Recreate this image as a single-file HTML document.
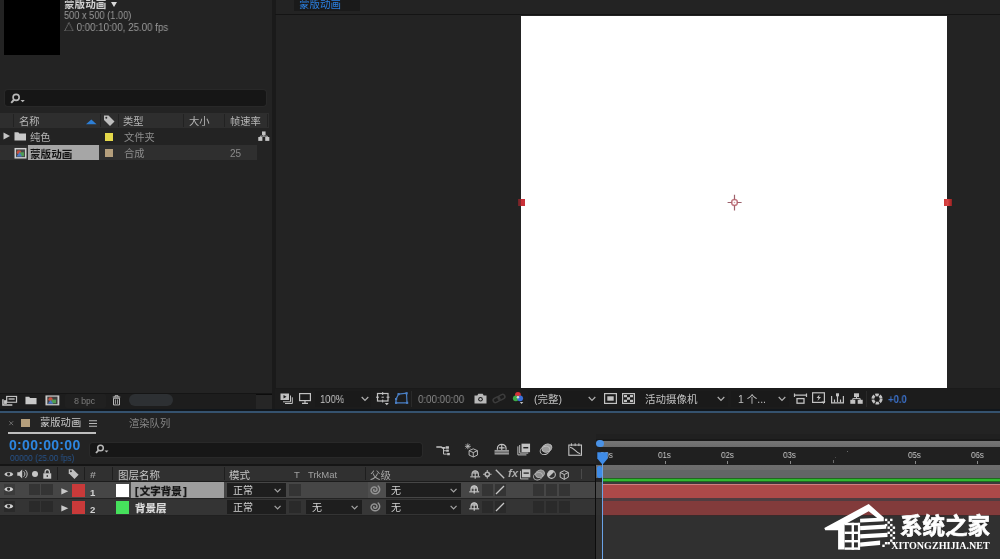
<!DOCTYPE html>
<html lang="zh-CN">
<head>
<meta charset="utf-8">
<title>蒙版动画</title>
<style>
*{box-sizing:border-box;margin:0;padding:0}
html,body{width:1000px;height:559px;overflow:hidden;background:#232323}
body{position:relative;font-family:"Liberation Sans","Noto Sans CJK SC",sans-serif;font-size:11px;color:#a9a9a9;line-height:1}
.a{position:absolute}
.t{position:absolute;white-space:nowrap;line-height:1;will-change:transform}
svg{position:absolute;overflow:visible}
</style>
</head>
<body>
<!-- ===== PROJECT PANEL ===== -->
<div id="project">
  <div class="a" style="left:4px;top:0;width:56px;height:55px;background:#000"></div>
  <div class="t" style="left:64px;top:-1.5px;font-size:10.6px;font-weight:bold;color:#cfcfcf">蒙版动画</div>
  <div class="a" style="left:111px;top:2px;width:0;height:0;border-left:3.5px solid transparent;border-right:3.5px solid transparent;border-top:5px solid #d8d8d8"></div>
  <div class="t" style="left:64px;top:10px;font-size:10.5px;color:#999;transform:scaleX(.88);transform-origin:0 0">500 x 500 (1.00)</div>
  <div class="t" style="left:64px;top:21.5px;font-size:10.5px;color:#999;transform:scaleX(.93);transform-origin:0 0">△ 0:00:10:00, 25.00 fps</div>
  <!-- search -->
  <div class="a" style="left:5px;top:90.3px;width:260.6px;height:15.4px;background:#161616;border-radius:3px;box-shadow:0 0 0 1px #282828"></div>
  <!-- header -->
  <div class="a" style="left:0;top:113px;width:269px;height:15px;background:#2e2e2e"></div>
  <div class="t" style="left:18.6px;top:117px;font-size:10.3px;color:#b4b4b4">名称</div>
  <div class="t" style="left:123px;top:117px;font-size:10.3px;color:#b4b4b4">类型</div>
  <div class="t" style="left:189px;top:117px;font-size:10.3px;color:#b4b4b4">大小</div>
  <div class="t" style="left:229.5px;top:117px;font-size:10.3px;color:#b4b4b4">帧速率</div>
  <!-- rows -->
  <div class="t" style="left:30.4px;top:133.2px;font-size:10.3px;color:#b4b4b4">纯色</div>
  <div class="t" style="left:124px;top:133.2px;font-size:10.3px;color:#8c8c8c">文件夹</div>
  <div class="a" style="left:0;top:145px;width:257px;height:15px;background:#2f2f2f"></div>
  <div class="a" style="left:28px;top:145px;width:71px;height:15px;background:#a6a6a6"></div>
  <div class="t" style="left:30.4px;top:149px;font-size:10.6px;font-weight:bold;color:#111">蒙版动画</div>
  <div class="t" style="left:124px;top:149px;font-size:10.3px;color:#8c8c8c">合成</div>
  <div class="t" style="left:229.8px;top:149.1px;font-size:10px;color:#8a8a8a">25</div>

  <div class="a" style="left:0;top:392.8px;width:272.4px;height:16.2px;background:#1d1d1d;border-top:1px solid #151515"></div>
  <!-- search icon -->
  <svg style="left:10px;top:92.6px" width="15.5" height="12" viewBox="0 0 14 11"><circle cx="5.5" cy="4" r="2.8" fill="none" stroke="#b8b8b8" stroke-width="1.5"/><path d="M3.6 6.2L1 9" stroke="#b8b8b8" stroke-width="1.8" fill="none"/><path d="M9.5 6.5h4l-2 2z" fill="#b8b8b8"/></svg>
  <!-- header separators -->
  <div class="a" style="left:13px;top:114px;width:1px;height:13px;background:#222"></div>
  <div class="a" style="left:100px;top:114px;width:1px;height:13px;background:#222"></div>
  <div class="a" style="left:118px;top:114px;width:1px;height:13px;background:#222"></div>
  <div class="a" style="left:183px;top:114px;width:1px;height:13px;background:#222"></div>
  <div class="a" style="left:224px;top:114px;width:1px;height:13px;background:#222"></div>
  <div class="a" style="left:267px;top:114px;width:1px;height:13px;background:#222"></div>
  <!-- sort arrow -->
  <svg style="left:86px;top:118.6px" width="10.6" height="5.6" viewBox="0 0 11 7" preserveAspectRatio="none"><path d="M0 6.5L5.5 0.5L11 6.5z" fill="#2d7fd6"/></svg>
  <!-- tag icon -->
  <svg style="left:103px;top:114px" width="13" height="13" viewBox="0 0 13 13"><path d="M1 1.5h4.5l6 6-4.5 4.5-6-6z" fill="#bdbdbd"/><circle cx="3.3" cy="3.8" r="1" fill="#2e2e2e"/></svg>
  <!-- row1 icons -->
  <svg style="left:3px;top:132px" width="8" height="8" viewBox="0 0 8 8"><path d="M0.5 0.5L7 4L0.5 7.5z" fill="#c4c4c4"/></svg>
  <svg style="left:14px;top:131px" width="12.5" height="10.3" viewBox="0 0 13 12" preserveAspectRatio="none"><path d="M0.5 1.5h4l1 1.5h7v8h-12z" fill="#c8c8c8"/></svg>
  <div class="a" style="left:104.7px;top:132.8px;width:8px;height:8px;background:#e4d84a"></div>
  <svg style="left:258.2px;top:131.3px" width="11.6" height="10.6" viewBox="0 0 13 12" preserveAspectRatio="none"><rect x="4.5" y="0.5" width="4" height="4" fill="#c4c4c4"/><rect x="0.3" y="6.8" width="4.6" height="4.4" fill="#c4c4c4"/><rect x="8.1" y="6.8" width="4.6" height="4.4" fill="#c4c4c4"/><path d="M6.5 4.5v1.5M2.6 7v-1.2h7.8v1.2" stroke="#c4c4c4" stroke-width="1" fill="none"/></svg>
  <!-- row2 icons -->
  <svg style="left:13.7px;top:146.6px" width="13" height="12.5" viewBox="0 0 13 13" preserveAspectRatio="none"><rect x="0.5" y="1" width="12" height="11" fill="#cfcfcf"/><rect x="2" y="2.5" width="9" height="8" fill="#4a4a4a"/><circle cx="5" cy="5.5" r="2.2" fill="#c94f3f"/><rect x="5.5" y="5.5" width="4.5" height="4" fill="#4f9b54"/><path d="M2.5 10l3-4.5 2.5 4.5z" fill="#4a78c8"/></svg>
  <div class="a" style="left:104.7px;top:149px;width:8px;height:8px;background:#b59f7c"></div>
  <!-- footer icons -->
  <svg style="left:2px;top:395.5px" width="15" height="10" viewBox="0 0 16 12" preserveAspectRatio="none"><rect x="5" y="0.5" width="10.5" height="7" fill="none" stroke="#c6c6c6" stroke-width="1.3"/><rect x="7" y="2.8" width="6.5" height="1.6" fill="#c6c6c6"/><path d="M1 4v6.8h10" stroke="#c6c6c6" stroke-width="1.6" fill="none"/><rect x="2.2" y="5" width="3" height="4.5" fill="#c6c6c6"/></svg>
  <svg style="left:25.2px;top:395.6px" width="12" height="8.6" viewBox="0 0 13 11" preserveAspectRatio="none"><path d="M0.5 1h4l1 1.5h7v8h-12z" fill="#c8c8c8"/></svg>
  <svg style="left:45px;top:395px" width="14.8" height="10.8" viewBox="0 0 16 13" preserveAspectRatio="none"><rect x="0.5" y="0.5" width="15" height="12" fill="#c8c8c8"/><rect x="2.5" y="2" width="11" height="9" fill="#3f3f3f"/><circle cx="6" cy="5" r="2.3" fill="#c94f3f"/><rect x="7" y="5.5" width="5" height="4.5" fill="#4f9b54"/><path d="M3 10.5l3-4.5 3 4.5z" fill="#4a78c8"/></svg>
  <div class="a" style="left:65px;top:394.4px;width:41px;height:13.4px;background:#202020;border-radius:2px"></div>
  <svg style="left:112px;top:394.8px" width="9" height="10.5" viewBox="0 0 12 13" preserveAspectRatio="none"><path d="M1 2.5h10M4 2.5v-1.6h4v1.6" stroke="#c6c6c6" stroke-width="1.2" fill="none"/><path d="M2 4h8v8.3h-8z" fill="none" stroke="#c6c6c6" stroke-width="1.2"/><path d="M4.6 5.5v5.5M7.4 5.5v5.5" stroke="#c6c6c6" stroke-width="1"/></svg>
  <div class="a" style="left:129px;top:393.8px;width:44px;height:12.4px;background:#2d3033;border-radius:6.2px"></div>
  <div class="a" style="left:256px;top:394px;width:16px;height:15px;background:#262626;border-top:1px solid #0c0c0c"></div>
  <!-- footer -->
  <div class="t" style="left:74.4px;top:396.3px;font-size:9.5px;color:#7e7e7e;transform:scaleX(.9);transform-origin:0 0">8 bpc</div>
</div>
<!-- divider -->
<div class="a" style="left:272.4px;top:0;width:3.2px;height:410px;background:#1a1a1a"></div>
<!-- ===== VIEWER ===== -->
<div id="viewer">
  <div class="a" style="left:294px;top:0;width:66px;height:11px;background:#1a1a1a"></div>
  <div class="t" style="left:299.3px;top:-0.8px;font-size:10.5px;color:#2b80e0">蒙版动画</div>
  <div class="a" style="left:275px;top:13.6px;width:725px;height:1.8px;background:#141414"></div>
  <div class="a" style="left:521px;top:16px;width:426px;height:372px;background:#fff"></div>
  <div class="a" style="left:275px;top:388px;width:725px;height:1px;background:#1a1a1a"></div>

  <!-- handles -->
  <div class="a" style="left:518.4px;top:199.4px;width:6.4px;height:6.6px;background:linear-gradient(90deg,#6e2226 0,#8a272b 38%,#cc3038 42%,#c8323a 100%)"></div>
  <div class="a" style="left:944.2px;top:199.2px;width:7.4px;height:7.2px;background:linear-gradient(90deg,#d03a3a 0,#d84848 45%,#c03030 70%,#8a2222 100%)"></div>
  <svg style="left:726.1px;top:193.6px" width="17" height="17" viewBox="0 0 17 17"><path d="M8.5 0.8v5M8.5 11.2V16.4M1.6 8.5h4.6M10.8 8.5H15.6" stroke="#8a4652" stroke-width="1.2" opacity=".85"/><circle cx="8.5" cy="8.5" r="2.9" fill="none" stroke="#b45c68" stroke-width="1.5" opacity=".8"/><circle cx="8.5" cy="8.5" r="0.8" fill="#d89aa4"/></svg>
  <!-- footer -->
  <div class="a" style="left:275px;top:389px;width:725px;height:20px;background:#1c1c1c"></div>
  <div class="a" style="left:315px;top:391px;width:56px;height:16px;background:#1a1a1a"></div>
  <svg style="left:280px;top:393px" width="13" height="11" viewBox="0 0 13 11"><rect x="0.5" y="0.5" width="8.5" height="6.5" fill="#c2c2c2"/><path d="M3.5 2v3.4l3-1.7z" fill="#1c1c1c"/><path d="M10.5 2.5v6.3H3M12.3 4.3v6.2H5" stroke="#c2c2c2" stroke-width="1" fill="none"/></svg>
  <svg style="left:299px;top:393px" width="12" height="11" viewBox="0 0 12 11"><rect x="0.6" y="0.6" width="10.8" height="7" fill="none" stroke="#c2c2c2" stroke-width="1.2"/><path d="M3 10.3h6M6 7.6v2.4" stroke="#c2c2c2" stroke-width="1.2"/></svg>
  <div class="t" style="left:319.5px;top:394px;font-size:10.5px;color:#c4c4c4;transform:scaleX(.9);transform-origin:0 0">100%</div>
  <svg style="left:361px;top:396px" width="8" height="6" viewBox="0 0 8 6"><path d="M0.7 1l3.3 3.3L7.3 1" stroke="#b0b0b0" stroke-width="1.2" fill="none"/></svg>
  <svg style="left:376px;top:392px" width="14" height="14" viewBox="0 0 14 14"><rect x="1.5" y="1.5" width="10.5" height="7.5" fill="none" stroke="#c2c2c2" stroke-width="1.2"/><path d="M6.7 0v3M6.7 7.5v3M0 5.2h3M10.5 5.2h3M5.5 5.2h2.4" stroke="#c2c2c2" stroke-width="1"/><path d="M8.8 11h4l-2 2.2z" fill="#c2c2c2"/></svg>
  <svg style="left:394px;top:392px" width="15" height="13" viewBox="0 0 15 13"><path d="M4.5 2.2L12.5 1.2L13 10.8H2L2 7.2z" fill="none" stroke="#4a7fc4" stroke-width="1.2"/><rect x="3.5" y="1" width="2.2" height="2.2" fill="#4a7fc4"/><rect x="11.5" y="0.2" width="2.2" height="2.2" fill="#4a7fc4"/><rect x="12" y="9.7" width="2.2" height="2.2" fill="#4a7fc4"/><rect x="1" y="9.7" width="2.2" height="2.2" fill="#4a7fc4"/><rect x="1" y="6" width="2.2" height="2.2" fill="#4a7fc4"/></svg>
  <div class="a" style="left:411px;top:391px;width:1px;height:16px;background:#2a2a2a"></div>
  <div class="t" style="left:417.5px;top:394px;font-size:10.5px;color:#8a8a8a;transform:scaleX(.93);transform-origin:0 0">0:00:00:00</div>
  <svg style="left:474px;top:393px" width="13" height="11" viewBox="0 0 13 11"><path d="M0.5 2.5h2.8l1-1.7h4.4l1 1.7h2.8v8h-12z" fill="#b8b8b8"/><circle cx="6.5" cy="6.2" r="2.3" fill="#1c1c1c"/><circle cx="6.5" cy="6.2" r="1.2" fill="#b8b8b8"/></svg>
  <svg style="left:492px;top:393px" width="14" height="11" viewBox="0 0 14 11"><rect x="1" y="4.5" width="7" height="4.5" rx="2.2" fill="none" stroke="#3c3c3c" stroke-width="1.5" transform="rotate(-28 4.5 6.7)"/><rect x="6" y="2" width="7" height="4.5" rx="2.2" fill="none" stroke="#3c3c3c" stroke-width="1.5" transform="rotate(-28 9.5 4.2)"/></svg>
  <svg style="left:511.6px;top:391.3px" width="12.4" height="14.2" viewBox="0 0 14 16"><circle cx="6.7" cy="4.5" r="3.3" fill="#d6323a"/><circle cx="4.3" cy="8.3" r="3.3" fill="#3cab47"/><circle cx="9.2" cy="8.3" r="3.3" fill="#3a6fd8"/><circle cx="6.7" cy="7" r="1.4" fill="#d8d8d8"/><path d="M8.8 12.5h4l-2 2.2z" fill="#c2c2c2"/></svg>
  <div class="a" style="left:528px;top:391px;width:72px;height:16px;background:#1a1a1a"></div>
  <div class="t" style="left:533.5px;top:393.5px;font-size:10.5px;color:#c0c0c0">(完整)</div>
  <svg style="left:588px;top:396px" width="8" height="6" viewBox="0 0 8 6"><path d="M0.7 1l3.3 3.3L7.3 1" stroke="#b0b0b0" stroke-width="1.2" fill="none"/></svg>
  <svg style="left:604px;top:393px" width="13" height="11" viewBox="0 0 13 11"><rect x="0.6" y="0.6" width="11.8" height="9.8" fill="none" stroke="#c2c2c2" stroke-width="1.2"/><rect x="3.3" y="3.3" width="6.4" height="4.4" fill="#c2c2c2"/></svg>
  <svg style="left:622px;top:393px" width="13" height="11" viewBox="0 0 13 11"><rect x="0.6" y="0.6" width="11.8" height="9.8" fill="none" stroke="#c2c2c2" stroke-width="1.2"/><path d="M2 2h3v2.3H2zM8 2h3v2.3H8zM5 4.3h3v2.4H5zM2 6.7h3V9H2zM8 6.7h3V9H8z" fill="#c2c2c2"/></svg>
  <div class="a" style="left:640px;top:391px;width:88px;height:16px;background:#1a1a1a"></div>
  <div class="t" style="left:645px;top:393.5px;font-size:10.5px;color:#c0c0c0">活动摄像机</div>
  <svg style="left:717px;top:396px" width="8" height="6" viewBox="0 0 8 6"><path d="M0.7 1l3.3 3.3L7.3 1" stroke="#b0b0b0" stroke-width="1.2" fill="none"/></svg>
  <div class="a" style="left:731px;top:391px;width:58px;height:16px;background:#1a1a1a"></div>
  <div class="t" style="left:738px;top:393.5px;font-size:10.5px;color:#c0c0c0">1 个...</div>
  <svg style="left:778px;top:396px" width="8" height="6" viewBox="0 0 8 6"><path d="M0.7 1l3.3 3.3L7.3 1" stroke="#b0b0b0" stroke-width="1.2" fill="none"/></svg>
  <svg style="left:794px;top:393px" width="13" height="11" viewBox="0 0 13 11"><path d="M0.5 2.2h12M0.5 0.5v3.4M12.5 0.5v3.4" stroke="#c2c2c2" stroke-width="1.2" fill="none"/><rect x="3" y="5.6" width="7" height="4.6" fill="none" stroke="#c2c2c2" stroke-width="1.3"/></svg>
  <svg style="left:812px;top:392px" width="14" height="13" viewBox="0 0 14 13"><rect x="0.6" y="0.8" width="11.8" height="9.6" fill="none" stroke="#c2c2c2" stroke-width="1.2"/><path d="M7.5 2.5L4.5 6h2l-1 3 3.5-4H7z" fill="#c2c2c2"/><path d="M9.5 9.5h4l-2 2.4z" fill="#c2c2c2"/></svg>
  <svg style="left:831px;top:393px" width="13" height="11" viewBox="0 0 13 11"><path d="M0.6 3v6.8h11.8V3" stroke="#c2c2c2" stroke-width="1.2" fill="none"/><path d="M6.5 1v8M3.5 6.5v3M9.5 6.5v3" stroke="#c2c2c2" stroke-width="1.2"/><rect x="5" y="0.3" width="3" height="3" fill="#c2c2c2"/></svg>
  <svg style="left:850px;top:393px" width="13" height="11" viewBox="0 0 13 11"><rect x="4" y="0.3" width="5" height="3.8" fill="#c2c2c2"/><rect x="0.3" y="6.8" width="5" height="4" fill="#c2c2c2"/><rect x="7.7" y="6.8" width="5" height="4" fill="#c2c2c2"/><path d="M6.5 4v1.6M2.8 7V5.6h7.4V7" stroke="#c2c2c2" stroke-width="1" fill="none"/></svg>
  <div class="a" style="left:866px;top:391px;width:1px;height:16px;background:#2a2a2a"></div>
  <svg style="left:871px;top:393px" width="12" height="12" viewBox="0 0 12 12"><circle cx="6" cy="6" r="4.2" fill="none" stroke="#c2c2c2" stroke-width="2.8" stroke-dasharray="3.4 1"/></svg>
  <div class="t" style="left:887.6px;top:394px;font-size:10.5px;color:#3a6ec4;font-weight:bold;transform:scaleX(.9);transform-origin:0 0">+0.0</div>
</div>
<!-- ===== TIMELINE ===== -->
<div id="timeline">
  <div class="a" style="left:0;top:408.6px;width:1000px;height:2.4px;background:#11161b"></div>
  <div class="a" style="left:0;top:410.8px;width:1000px;height:2.2px;background:#35526e"></div>

  <svg style="left:8.6px;top:421px" width="4.4" height="4.4" viewBox="0 0 5 5"><path d="M0.3 0.3l4.4 4.4M4.7 0.3L0.3 4.700" stroke="#707070" stroke-width="1.1"/></svg>
  <div class="a" style="left:21px;top:419px;width:9px;height:8px;background:#b59f7c"></div>
  <div class="t" style="left:39.6px;top:418.2px;font-size:10.3px;color:#c8c8c8">蒙版动画</div>
  <svg style="left:89px;top:420px" width="8" height="7" viewBox="0 0 8 7"><path d="M0 0.7h8M0 3.5h8M0 6.3h8" stroke="#b8b8b8" stroke-width="1.1"/></svg>
  <div class="a" style="left:8px;top:432px;width:88px;height:2px;background:#bdbdbd"></div>
  <div class="t" style="left:129px;top:418.5px;font-size:10.3px;color:#858585">渲染队列</div>
  <div class="t" style="left:8.6px;top:437.6px;font-size:14px;font-weight:bold;color:#2d86e0;letter-spacing:.3px">0:00:00:00</div>
  <div class="t" style="left:9.6px;top:453.6px;font-size:8.6px;color:#27548c;transform:scaleX(.955);transform-origin:0 0">00000 (25.00 fps)</div>
  <div class="a" style="left:90.4px;top:442.6px;width:332px;height:14.4px;background:#171717;border-radius:3px;box-shadow:0 0 0 1px #292929"></div>
  <svg style="left:95px;top:444px" width="14" height="11" viewBox="0 0 14 11"><circle cx="5.5" cy="4" r="2.8" fill="none" stroke="#b8b8b8" stroke-width="1.5"/><path d="M3.6 6.2L1 9" stroke="#b8b8b8" stroke-width="1.8" fill="none"/><path d="M9.5 6.5h4l-2 2z" fill="#b8b8b8"/></svg>
  <svg style="left:436.3px;top:445px" width="15" height="11.5" viewBox="0 0 15 12"><path d="M0 2h5l1.5 1h3" stroke="#c2c2c2" stroke-width="1.6" fill="none"/><path d="M7.5 3v6.5h3.5M7.5 6h3" stroke="#c2c2c2" stroke-width="1" fill="none"/><rect x="9.8" y="1.3" width="3.4" height="2.6" fill="#c2c2c2"/><rect x="10.3" y="4.8" width="2.8" height="2.2" fill="#c2c2c2"/><rect x="11.3" y="8.3" width="2.8" height="2.4" fill="#c2c2c2"/></svg>
  <svg style="left:464px;top:442.8px" width="16" height="15" viewBox="0 0 18 18"><path d="M4 0.5v7M0.5 4h7M1.5 1.5l5 5M6.5 1.5l-5 5" stroke="#c2c2c2" stroke-width="1"/><path d="M10.5 7l5 2.2v5.3l-5 2.3-5-2.3V9.2zM5.5 9.2l5 2.3 5-2.3M10.5 11.5v5.3" fill="none" stroke="#c2c2c2" stroke-width="1.1"/></svg>
  <svg style="left:493.8px;top:444px" width="15.5" height="11.5" viewBox="0 0 16 12"><path d="M3.5 6V4.5a4.5 4.2 0 0 1 9 0V6" fill="none" stroke="#c2c2c2" stroke-width="1.3"/><path d="M8 1v9.5M5 4h6" stroke="#c2c2c2" stroke-width="1.2"/><rect x="0.5" y="6.2" width="15" height="4.8" fill="#9a9a9a"/><path d="M0.5 8.5h15" stroke="#232323" stroke-width="0.6"/></svg>
  <svg style="left:516.8px;top:443.3px" width="13.5" height="13" viewBox="0 0 15 14"><path d="M1 3.5v9.5h9.5M3 2v9h9.5" stroke="#c2c2c2" stroke-width="1.1" fill="none"/><rect x="5" y="0.5" width="9.5" height="9.5" fill="#c2c2c2"/><rect x="7" y="4.2" width="5.5" height="1.6" fill="#232323"/></svg>
  <svg style="left:538.8px;top:443.3px" width="14" height="13" viewBox="0 0 15 14"><ellipse cx="8.5" cy="5.5" rx="5.5" ry="4.2" fill="#9c9c9c" stroke="#c2c2c2" stroke-width="1" transform="rotate(-25 8.5 5.5)"/><ellipse cx="6.5" cy="8" rx="5.5" ry="4.2" fill="none" stroke="#c2c2c2" stroke-width="1" transform="rotate(-25 6.5 8)"/></svg>
  <svg style="left:568px;top:443.2px" width="14.3" height="13" viewBox="0 0 15 14"><rect x="0.7" y="2.2" width="13.6" height="11" fill="none" stroke="#c2c2c2" stroke-width="1.2"/><path d="M3.5 0.3v3M7.5 0.3v3M11.5 0.3v3" stroke="#c2c2c2" stroke-width="1"/><path d="M2 4.5C7 5 8 11 13 11.5" fill="none" stroke="#c2c2c2" stroke-width="1.1"/></svg>
  <div class="a" style="left:0;top:464px;width:596px;height:2px;background:#151515"></div>
  <div class="a" style="left:0;top:466px;width:595px;height:15px;background:#303030"></div>
  <div class="a" style="left:0;top:481px;width:595px;height:1px;background:#1c1c1c"></div>
  <div class="a" style="left:57px;top:467px;width:1px;height:13px;background:#1e1e1e"></div>
  <div class="a" style="left:84px;top:467px;width:1px;height:13px;background:#1e1e1e"></div>
  <div class="a" style="left:112px;top:467px;width:1px;height:13px;background:#1e1e1e"></div>
  <div class="a" style="left:224px;top:467px;width:1px;height:13px;background:#1e1e1e"></div>
  <div class="a" style="left:365px;top:467px;width:1px;height:13px;background:#1e1e1e"></div>
  <div class="a" style="left:581px;top:469px;width:1px;height:10px;background:#4a4a4a"></div>
  <svg style="left:4.4px;top:470.9px" width="9.6" height="6.4" viewBox="0 0 10 7"><path d="M0.1 3.5C1.8 0.3 8.2 0.3 9.9 3.5C8.2 6.7 1.8 6.7 0.1 3.5z" fill="#c6c6c6"/><circle cx="4.8" cy="3.4" r="1.75" fill="#2a2a2a"/></svg>
  <svg style="left:16.8px;top:469.4px" width="10.4" height="10" viewBox="0 0 11 11" preserveAspectRatio="none"><path d="M0.3 3.5h2.2l3-3v10l-3-3h-2.2z" fill="#c6c6c6"/><path d="M7 2.5a4 4 0 0 1 0 6M8.8 1a6 6 0 0 1 0 9" fill="none" stroke="#c6c6c6" stroke-width="1"/></svg>
  <div class="a" style="left:31.6px;top:471px;width:6.4px;height:6.4px;border-radius:3.2px;background:#c6c6c6"></div>
  <svg style="left:43px;top:468.5px" width="8.5" height="10" viewBox="0 0 9 10" preserveAspectRatio="none"><path d="M2.2 4.5V3a2.3 2.3 0 0 1 4.6 0v1.5" fill="none" stroke="#c6c6c6" stroke-width="1.3"/><rect x="0.3" y="4.3" width="8.4" height="5.4" fill="#c6c6c6"/><rect x="3.9" y="6" width="1.2" height="2" fill="#303030"/></svg>
  <svg style="left:68.3px;top:468px" width="11.6" height="11.6" viewBox="0 0 12 12"><path d="M0.8 1.2h4.2l6 5.8-4.3 4.3-5.9-5.9z" fill="#c0c0c0"/><circle cx="3" cy="3.4" r="1" fill="#303030"/></svg>
  <div class="t" style="left:89.6px;top:470.2px;font-size:9.6px;font-weight:bold;color:#9c9c9c;transform:scaleX(1.1);transform-origin:0 0">#</div>
  <div class="t" style="left:117.6px;top:469.6px;font-size:10.5px;color:#c4c4c4">图层名称</div>
  <div class="t" style="left:229.3px;top:469.6px;font-size:10.5px;color:#c4c4c4">模式</div>
  <div class="t" style="left:293.5px;top:470px;font-size:9.5px;color:#a0a0a0">T</div>
  <div class="t" style="left:308px;top:470px;font-size:9.5px;color:#a0a0a0">TrkMat</div>
  <div class="t" style="left:370.3px;top:469.6px;font-size:10.5px;color:#a6a6a6">父级</div>
  <svg style="left:469.7px;top:469.8px" width="10.4" height="9" viewBox="0 0 11 10"><path d="M2 7V4.300a3.500 3.500 0 0 1 7 0V7" fill="none" stroke="#c0c0c0" stroke-width="1.3"/><path d="M2.200 4.200a3.300 3.300 0 0 1 6.600 0z" fill="#c0c0c0" opacity=".75"/><path d="M0 7.600h11" stroke="#c0c0c0" stroke-width="1.200"/><path d="M5.500 3v6.600" stroke="#c0c0c0" stroke-width="1.200"/></svg>
  <svg style="left:483.4px;top:470px" width="8.6" height="8.6" viewBox="0 0 10 10"><path d="M5 0v10M0 5h10" stroke="#b4b4b4" stroke-width="1.3"/><circle cx="5" cy="5" r="3.3" fill="#b4b4b4"/><circle cx="5" cy="5" r="1.5" fill="#303030"/></svg>
  <svg style="left:494.5px;top:469px" width="10" height="10" viewBox="0 0 10 10"><path d="M0.8 0.8L9.2 9.2" stroke="#c0c0c0" stroke-width="1.3"/></svg>
  <div class="t" style="left:508px;top:467.6px;font-size:11.5px;font-style:italic;font-weight:bold;color:#ababab;letter-spacing:-.2px">fx</div>
  <svg style="left:520px;top:469px" width="10.6" height="10.4" viewBox="0 0 12 11" preserveAspectRatio="none"><path d="M0.6 2v8.5h9" stroke="#c0c0c0" stroke-width="1" fill="none"/><rect x="2.2" y="0.3" width="9.5" height="8.5" fill="#c0c0c0"/><rect x="4" y="3.6" width="6" height="1.5" fill="#303030"/></svg>
  <svg style="left:532.5px;top:468.5px" width="12" height="12" viewBox="0 0 12 12"><ellipse cx="7" cy="4.8" rx="4.6" ry="3.6" fill="#8c8c8c" stroke="#b4b4b4" stroke-width="0.9" transform="rotate(-25 7 4.8)"/><ellipse cx="5" cy="7.2" rx="4.6" ry="3.6" fill="none" stroke="#b4b4b4" stroke-width="0.9" transform="rotate(-25 5 7.2)"/></svg>
  <svg style="left:546.8px;top:469.8px" width="9" height="9" viewBox="0 0 10 10"><circle cx="5" cy="5" r="4.3" fill="#303030" stroke="#c0c0c0" stroke-width="1.2"/><path d="M1.9 8.1A4.3 4.3 0 0 1 8.1 1.9z" fill="#c0c0c0"/></svg>
  <svg style="left:558.5px;top:469.5px" width="10.5" height="10" viewBox="0 0 11 11"><path d="M5.5 0.7l4.5 2v5.2l-4.5 2.4-4.5-2.4V2.7z" fill="none" stroke="#c0c0c0" stroke-width="1.1"/><path d="M1 2.7l4.5 2.3 4.5-2.3M5.5 5v5.3" fill="none" stroke="#c0c0c0" stroke-width="1.1"/></svg>
  <div class="a" style="left:0;top:482px;width:595px;height:16px;background:#464646"></div>
  <div class="a" style="left:3.5px;top:483.7px;width:11.4px;height:11.4px;background:#3b3b3b"></div>
  <svg style="left:4.4px;top:486.1px" width="9.6" height="6.4" viewBox="0 0 10 7"><path d="M0.1 3.5C1.8 0.3 8.2 0.3 9.9 3.5C8.2 6.7 1.8 6.7 0.1 3.5z" fill="#d0d0d0"/><circle cx="4.8" cy="3.4" r="1.75" fill="#2a2a2a"/></svg>
  <div class="a" style="left:29px;top:484px;width:11px;height:11.4px;background:#343434"></div>
  <div class="a" style="left:41.3px;top:484px;width:11.5px;height:11.4px;background:#343434"></div>
  <svg style="left:61.2px;top:487.6px" width="7.6" height="6.6" viewBox="0 0 8 7"><path d="M0.3 0.2L7.7 3.5L0.3 6.8z" fill="#c8c8c8"/></svg>
  <div class="a" style="left:72px;top:484.3px;width:13.4px;height:12.4px;background:#c93a3a"></div>
  <div class="t" style="left:90px;top:487.6px;font-size:9.6px;font-weight:bold;color:#d2d2d2">1</div>
  <div class="a" style="left:116px;top:484px;width:13px;height:13px;background:#ffffff"></div>
  <div class="a" style="left:131px;top:482px;width:92.5px;height:16px;background:#9e9e9e"></div>
  <div class="t" style="left:134.5px;top:486.3px;font-size:10.5px;font-weight:bold;color:#161616;-webkit-text-stroke:.25px #161616"><span style="margin-right:1.2px">[</span>文字背景<span style="margin-left:1.6px">]</span></div>
  <div class="a" style="left:226.5px;top:483px;width:59px;height:14px;background:#1e1e1e"></div>
  <div class="t" style="left:232.5px;top:485.5px;font-size:10px;color:#d2d2d2">正常</div>
  <svg style="left:274.2px;top:488.2px" width="7.2" height="5.4" viewBox="0 0 8 6"><path d="M0.7 1l3.3 3.3L7.3 1" stroke="#a4a4a4" stroke-width="1.4" fill="none"/></svg>
  <div class="a" style="left:289px;top:484px;width:11.5px;height:12px;background:#343434"></div>
  <div class="a" style="left:367.6px;top:482px;width:18px;height:16px;background:#4e4e4e"></div>
  <svg style="left:369px;top:484.4px" width="11.4" height="11.4" viewBox="0 0 11 11"><path d="M4.80 5.34 L4.66 5.47 L4.56 5.65 L4.51 5.87 L4.52 6.11 L4.59 6.35 L4.74 6.59 L4.96 6.80 L5.24 6.96 L5.58 7.07 L5.95 7.10 L6.34 7.04 L6.72 6.90 L7.08 6.67 L7.38 6.36 L7.60 5.97 L7.73 5.53 L7.75 5.05 L7.64 4.57 L7.41 4.10 L7.07 3.68 L6.61 3.33 L6.06 3.07 L5.44 2.94 L4.78 2.93 L4.12 3.07 L3.49 3.35 L2.93 3.76 L2.47 4.29 L2.15 4.93 L1.98 5.63 L1.98 6.37 L2.17 7.11 L2.54 7.80 L3.08 8.42 L3.77 8.92 L4.58 9.28 L5.48 9.46 L6.42 9.45 L7.36 9.25 L8.24 8.84 L9.01 8.26 L9.64 7.51 L10.09 6.64 L10.31 5.68 L10.30 4.67 L10.05 3.68 L9.55 2.75 L8.83 1.92" fill="none" stroke="#949494" stroke-width="1.35" stroke-linejoin="round" stroke-linecap="round"/></svg>
  <div class="a" style="left:385.5px;top:483px;width:75px;height:14px;background:#1e1e1e"></div>
  <div class="t" style="left:391px;top:485.5px;font-size:10px;color:#d2d2d2">无</div>
  <svg style="left:450.2px;top:488.2px" width="7.2" height="5.4" viewBox="0 0 8 6"><path d="M0.7 1l3.3 3.3L7.3 1" stroke="#a4a4a4" stroke-width="1.4" fill="none"/></svg>
  <svg style="left:469.2px;top:485.3px" width="10.4" height="9" viewBox="0 0 11 10"><path d="M2 7V4.300a3.500 3.500 0 0 1 7 0V7" fill="none" stroke="#d0d0d0" stroke-width="1.3"/><path d="M2.200 4.200a3.300 3.300 0 0 1 6.600 0z" fill="#d0d0d0" opacity=".75"/><path d="M0 7.600h11" stroke="#d0d0d0" stroke-width="1.200"/><path d="M5.500 3v6.600" stroke="#d0d0d0" stroke-width="1.200"/></svg>
  <div class="a" style="left:481.5px;top:484px;width:11px;height:12px;background:#343434"></div>
  <div class="a" style="left:494.5px;top:484px;width:11px;height:12px;background:#343434"></div>
  <svg style="left:495px;top:485px" width="10" height="10" viewBox="0 0 10 10"><path d="M1 9L9 1" stroke="#c8c8c8" stroke-width="1.3"/></svg>
  <div class="a" style="left:533px;top:484px;width:11px;height:12px;background:#343434"></div>
  <div class="a" style="left:545.5px;top:484px;width:11px;height:12px;background:#343434"></div>
  <div class="a" style="left:558.5px;top:484px;width:11px;height:12px;background:#343434"></div>
  <div class="a" style="left:0;top:499px;width:595px;height:16px;background:#343434"></div>
  <div class="a" style="left:0;top:515px;width:595px;height:1px;background:#202020"></div>
  <div class="a" style="left:3.5px;top:500.7px;width:11.4px;height:11.4px;background:#2a2a2a"></div>
  <svg style="left:4.4px;top:503.1px" width="9.6" height="6.4" viewBox="0 0 10 7"><path d="M0.1 3.5C1.8 0.3 8.2 0.3 9.9 3.5C8.2 6.7 1.8 6.7 0.1 3.5z" fill="#d0d0d0"/><circle cx="4.8" cy="3.4" r="1.75" fill="#2a2a2a"/></svg>
  <div class="a" style="left:29px;top:501px;width:11px;height:11.4px;background:#2a2a2a"></div>
  <div class="a" style="left:41.3px;top:501px;width:11.5px;height:11.4px;background:#2a2a2a"></div>
  <svg style="left:61.2px;top:504.6px" width="7.6" height="6.6" viewBox="0 0 8 7"><path d="M0.3 0.2L7.7 3.5L0.3 6.8z" fill="#c8c8c8"/></svg>
  <div class="a" style="left:72px;top:501.3px;width:13.4px;height:12.4px;background:#c93a3a"></div>
  <div class="t" style="left:90px;top:504.6px;font-size:9.6px;font-weight:bold;color:#d2d2d2">2</div>
  <div class="a" style="left:116px;top:501px;width:13px;height:13px;background:#46e05c"></div>
  <div class="t" style="left:134.5px;top:503.3px;font-size:10.5px;font-weight:bold;color:#dcdcdc;-webkit-text-stroke:.2px #dcdcdc">背景层</div>
  <div class="a" style="left:226.5px;top:500px;width:59px;height:14px;background:#1e1e1e"></div>
  <div class="t" style="left:232.5px;top:502.5px;font-size:10px;color:#d2d2d2">正常</div>
  <svg style="left:274.2px;top:505.2px" width="7.2" height="5.4" viewBox="0 0 8 6"><path d="M0.7 1l3.3 3.3L7.3 1" stroke="#a4a4a4" stroke-width="1.4" fill="none"/></svg>
  <div class="a" style="left:289px;top:501px;width:11.5px;height:12px;background:#2a2a2a"></div>
  <div class="a" style="left:305.5px;top:500px;width:56px;height:14px;background:#1e1e1e"></div>
  <div class="t" style="left:311.5px;top:502.5px;font-size:10px;color:#d2d2d2">无</div>
  <svg style="left:350.7px;top:505.2px" width="7.2" height="5.4" viewBox="0 0 8 6"><path d="M0.7 1l3.3 3.3L7.3 1" stroke="#a4a4a4" stroke-width="1.4" fill="none"/></svg>
  <div class="a" style="left:362px;top:499px;width:23.5px;height:16px;background:#373737"></div>
  <svg style="left:369px;top:501.1px" width="11.4" height="11.4" viewBox="0 0 11 11"><path d="M4.80 5.34 L4.66 5.47 L4.56 5.65 L4.51 5.87 L4.52 6.11 L4.59 6.35 L4.74 6.59 L4.96 6.80 L5.24 6.96 L5.58 7.07 L5.95 7.10 L6.34 7.04 L6.72 6.90 L7.08 6.67 L7.38 6.36 L7.60 5.97 L7.73 5.53 L7.75 5.05 L7.64 4.57 L7.41 4.10 L7.07 3.68 L6.61 3.33 L6.06 3.07 L5.44 2.94 L4.78 2.93 L4.12 3.07 L3.49 3.35 L2.93 3.76 L2.47 4.29 L2.15 4.93 L1.98 5.63 L1.98 6.37 L2.17 7.11 L2.54 7.80 L3.08 8.42 L3.77 8.92 L4.58 9.28 L5.48 9.46 L6.42 9.45 L7.36 9.25 L8.24 8.84 L9.01 8.26 L9.64 7.51 L10.09 6.64 L10.31 5.68 L10.30 4.67 L10.05 3.68 L9.55 2.75 L8.83 1.92" fill="none" stroke="#949494" stroke-width="1.35" stroke-linejoin="round" stroke-linecap="round"/></svg>
  <div class="a" style="left:385.5px;top:500px;width:75px;height:14px;background:#1e1e1e"></div>
  <div class="t" style="left:391px;top:502.5px;font-size:10px;color:#d2d2d2">无</div>
  <svg style="left:450.2px;top:505.2px" width="7.2" height="5.4" viewBox="0 0 8 6"><path d="M0.7 1l3.3 3.3L7.3 1" stroke="#a4a4a4" stroke-width="1.4" fill="none"/></svg>
  <svg style="left:469.2px;top:502.3px" width="10.4" height="9" viewBox="0 0 11 10"><path d="M2 7V4.300a3.500 3.500 0 0 1 7 0V7" fill="none" stroke="#d0d0d0" stroke-width="1.3"/><path d="M2.200 4.200a3.300 3.300 0 0 1 6.600 0z" fill="#d0d0d0" opacity=".75"/><path d="M0 7.600h11" stroke="#d0d0d0" stroke-width="1.200"/><path d="M5.500 3v6.600" stroke="#d0d0d0" stroke-width="1.200"/></svg>
  <div class="a" style="left:481.5px;top:501px;width:11px;height:12px;background:#2a2a2a"></div>
  <div class="a" style="left:494.5px;top:501px;width:11px;height:12px;background:#2a2a2a"></div>
  <svg style="left:495px;top:502px" width="10" height="10" viewBox="0 0 10 10"><path d="M1 9L9 1" stroke="#c8c8c8" stroke-width="1.3"/></svg>
  <div class="a" style="left:533px;top:501px;width:11px;height:12px;background:#2a2a2a"></div>
  <div class="a" style="left:545.5px;top:501px;width:11px;height:12px;background:#2a2a2a"></div>
  <div class="a" style="left:558.5px;top:501px;width:11px;height:12px;background:#2a2a2a"></div>
  <div class="a" style="left:594.7px;top:465px;width:1.4px;height:94px;background:#0c0c0c"></div>
  <div class="a" style="left:596px;top:515px;width:404px;height:44px;background:#303030"></div>
  <div class="a" style="left:596px;top:434px;width:404px;height:31px;background:#202020"></div>
  <div class="a" style="left:596px;top:438.6px;width:404px;height:2px;background:#191919"></div>
  <div class="a" style="left:600px;top:440.6px;width:400px;height:6.4px;background:linear-gradient(180deg,#767676,#6c6c6c)"></div>
  <div class="a" style="left:596px;top:440px;width:7.6px;height:7.4px;background:#4a92e6;border-radius:3.7px"></div>
  <div class="t" style="left:600px;top:450.7px;font-size:8.8px;color:#c8c8c8;transform:scaleX(.9);transform-origin:0 0">00s</div>
  <div class="t" style="left:658.0px;top:450.7px;font-size:8.8px;color:#c8c8c8;transform:scaleX(.9);transform-origin:0 0">01s</div>
  <div class="t" style="left:720.5px;top:450.7px;font-size:8.8px;color:#c8c8c8;transform:scaleX(.9);transform-origin:0 0">02s</div>
  <div class="t" style="left:783.0px;top:450.7px;font-size:8.8px;color:#c8c8c8;transform:scaleX(.9);transform-origin:0 0">03s</div>
  <div class="t" style="left:908.0px;top:450.7px;font-size:8.8px;color:#c8c8c8;transform:scaleX(.9);transform-origin:0 0">05s</div>
  <div class="t" style="left:971.0px;top:450.7px;font-size:8.8px;color:#c8c8c8;transform:scaleX(.9);transform-origin:0 0">06s</div>
  <div class="a" style="left:664.5px;top:460.5px;width:1px;height:3px;background:#8a8a8a"></div>
  <div class="a" style="left:727px;top:460.5px;width:1px;height:3px;background:#8a8a8a"></div>
  <div class="a" style="left:789.5px;top:460.5px;width:1px;height:3px;background:#8a8a8a"></div>
  <div class="a" style="left:914.5px;top:460.5px;width:1px;height:3px;background:#8a8a8a"></div>
  <div class="a" style="left:977px;top:460.5px;width:1px;height:3px;background:#8a8a8a"></div>
  <div class="a" style="left:596px;top:465px;width:404px;height:13px;background:linear-gradient(180deg,#6e6e6e 0,#6c6c6c 38%,#626666 42%,#626666 100%)"></div>
  <div class="a" style="left:596.5px;top:465.5px;width:5px;height:12px;background:#3f8ce8;border-radius:2px"></div>
  <div class="a" style="left:602px;top:478px;width:398px;height:4px;background:#30b830;border-top:1px solid #1f6a1f;border-bottom:1px solid #1f6a1f"></div>
  <div class="a" style="left:596px;top:482px;width:6px;height:16px;background:#4a4a4a"></div>
  <div class="a" style="left:596px;top:499px;width:6px;height:16px;background:#323232"></div>
  <div class="a" style="left:602px;top:482px;width:398px;height:2px;background:#3a3a3a"></div>
  <div class="a" style="left:602px;top:483.5px;width:398px;height:15px;background:#ad4949;border-top:1px solid #cc8080"></div>
  <div class="a" style="left:602px;top:498.4px;width:398px;height:3px;background:#503c40"></div>
  <div class="a" style="left:602px;top:501.2px;width:398px;height:13.6px;background:#823b3b"></div>
  <div class="a" style="left:602px;top:514.5px;width:398px;height:1.5px;background:#3a2a2a"></div>
  <div class="a" style="left:832.6px;top:460px;width:1px;height:2.6px;background:#6a6a6a"></div>
  <div class="a" style="left:835px;top:457px;width:1px;height:1.4px;background:#4a4a4a"></div>
  <div class="a" style="left:846.6px;top:451px;width:1.6px;height:1.4px;background:#6a6a6a"></div>
  <div class="a" style="left:602px;top:456px;width:1px;height:103px;background:#6aa2e6"></div>
  <svg style="left:597px;top:451.5px" width="11" height="13" viewBox="0 0 11 13"><path d="M0.3 0.3h10.4v6.2l-5.2 6.2-5.2-6.2z" fill="#3f8ce8"/></svg>
  <svg style="left:815px;top:495px" width="185" height="64" viewBox="0 0 185 64">
<g fill="#fff"><polygon points="9.3,32.9 53.7,8.9 68.8,22.6 65.1,25.2 53.7,16.3 29.6,29.6 29.6,54.6 23.1,54.6 23.1,35.2 10.2,35.2"/>
<rect x="29.6" y="27.8" width="15.2" height="2.4"/>
<rect x="29.6" y="36.6" width="15.2" height="2.4"/>
<rect x="29.6" y="45.0" width="15.2" height="2.4"/>
<rect x="29.6" y="52.4" width="15.2" height="2.4"/>
<rect x="36.6" y="27.8" width="2.4" height="27.0"/>
<rect x="42.9" y="27.8" width="2.2" height="27.0"/>
<polygon points="45.1,23.7 68.8,22.6 68.8,26.3 45.1,27.4"/>
<polygon points="45.1,31.1 71.2,29.6 71.2,33.7 45.1,35.2"/>
<polygon points="45.1,39.2 72.5,37.7 72.5,42.0 45.1,43.5"/>
<polygon points="45.1,47.4 65.1,45.5 65.1,50.0 45.1,51.8"/>
<rect x="69.9" y="23.7" width="2.4" height="2.4"/>
<rect x="72.5" y="26.3" width="2.4" height="2.4"/>
<rect x="75.1" y="23.7" width="2.4" height="2.4"/>
<rect x="69.9" y="28.9" width="2.4" height="2.4"/>
<rect x="75.1" y="28.9" width="2.4" height="2.4"/>
<rect x="72.5" y="31.5" width="2.4" height="2.4"/>
<rect x="77.7" y="31.5" width="2.4" height="2.4"/>
<rect x="75.1" y="34.0" width="2.4" height="2.4"/>
<rect x="72.5" y="36.6" width="2.4" height="2.4"/>
<rect x="77.7" y="36.6" width="2.4" height="2.4"/>
<rect x="75.1" y="39.2" width="2.4" height="2.4"/>
<rect x="77.7" y="41.8" width="2.4" height="2.4"/>
<rect x="75.1" y="44.4" width="2.4" height="2.4"/>
<rect x="72.5" y="47.0" width="2.4" height="2.4"/>
<rect x="77.7" y="47.0" width="2.4" height="2.4"/>
<rect x="67.3" y="49.6" width="2.4" height="2.4"/>
<rect x="69.9" y="47.0" width="2.4" height="2.4"/></g>
<text x="85" y="39.3" font-family="'Liberation Sans','Noto Sans CJK SC',sans-serif" font-weight="bold" font-size="22.6" fill="#fff" stroke="#fff" stroke-width="0.7" textLength="90" lengthAdjust="spacingAndGlyphs">系统之家</text>
<text x="76.3" y="54" font-family="'Liberation Serif',serif" font-weight="bold" font-size="9.3" fill="#fff" textLength="98.5" lengthAdjust="spacingAndGlyphs">XITONGZHIJIA.NET</text>
</svg>
</div>
</body>
</html>
